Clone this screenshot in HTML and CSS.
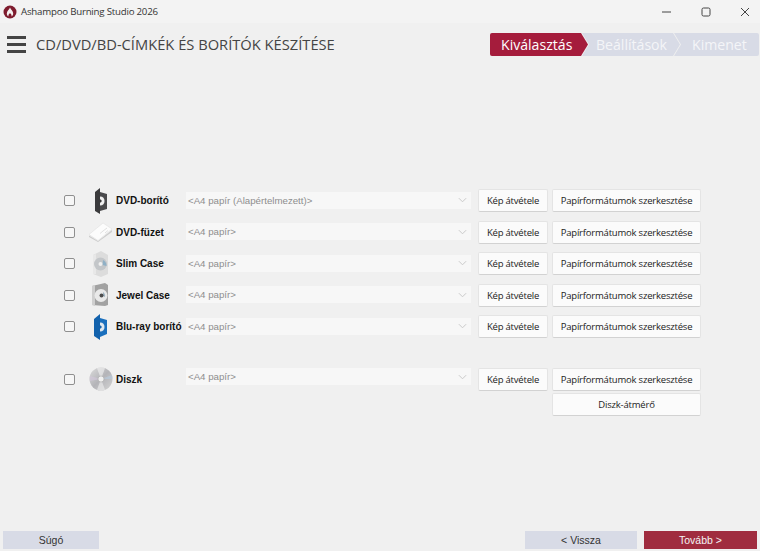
FILE: index.html
```html
<!DOCTYPE html>
<html lang="en">
<head>
  <meta charset="UTF-8">
  <meta name="viewport" content="width=device-width, initial-scale=1.0">
  <title>Ashampoo Burning Studio 2026</title>
  <link rel="stylesheet" href="styles.css">
</head>
<body>
  <svg class="defs" width="0" height="0">
    <symbol id="chev" viewBox="0 0 10 6"><path d="M1 1l4 4 4-4" fill="none" stroke="#c4c4c4" stroke-width="1"/></symbol>
  </svg>

  <div class="titlebar">
    <svg class="app-logo" viewBox="0 0 14 14" width="14" height="14">
      <circle cx="7" cy="7" r="6.500" fill="#7e1c2e"/>
      <path d="M7 2.500c.6 2 3.200 3.400 3.200 6.100 0 1.600-1 2.600-1.600 2.900.2-1.500-.5-2.500-1.600-3.200-1.100.7-1.800 1.700-1.600 3.200-.6-.3-1.600-1.300-1.600-2.900C3.800 5.900 6.400 4.500 7 2.500z" fill="#f4f0f0"/>
    </svg>
    <span class="app-name">Ashampoo Burning Studio 2026</span>
    <div class="win-controls">
      <svg viewBox="0 0 10 10" width="10" height="10"><path d="M0 5h9" stroke="#444" stroke-width="1"/></svg>
      <svg viewBox="0 0 10 10" width="10" height="10"><rect x="1" y="1" width="8" height="8" rx="1.500" fill="none" stroke="#444" stroke-width="1"/></svg>
      <svg viewBox="0 0 10 10" width="10" height="10"><path d="M1 1l8 8M9 1l-8 8" stroke="#444" stroke-width="1"/></svg>
    </div>
  </div>

  <header class="topbar">
    <div class="hamburger"><span></span><span></span><span></span></div>
    <h1>CD/DVD/BD-CÍMKÉK ÉS BORÍTÓK KÉSZÍTÉSE</h1>
    <div class="steps">
      <svg class="steps-bg" viewBox="0 0 269 23" width="269" height="23">
        <path d="M2 0H91l7 11.500-7 11.500H2a2 2 0 0 1-2-2V2a2 2 0 0 1 2-2z" fill="#a51c3c"/>
        <path d="M92 0H183l7 11.500-7 11.500H92l7-11.500z" fill="#d8dbe6"/>
        <path d="M184 0H267a2 2 0 0 1 2 2v19a2 2 0 0 1-2 2H184l7-11.500z" fill="#d8dbe6"/>
      </svg>
      <span class="step step-active">Kiválasztás</span>
      <span class="step step-mid">Beállítások</span>
      <span class="step step-last">Kimenet</span>
    </div>
  </header>

  <main class="content">
    <div class="row">
      <span class="check"></span>
      <span class="icon">
        <svg viewBox="0 0 24 28" width="24" height="28">
          <path d="M6 5l5-4v26l-5-3z" fill="#3a3a3c"/>
          <path d="M11 5l7 2v15l-7 2z" fill="#4a4a4c"/>
          <path d="M11 9.500c3.200 0 4.500 2 4.500 4.500s-1.300 4.500-4.500 4.500z" fill="#f0f0f0"/>
          <path d="M11 12.500c1 0 1.700.6 1.700 1.500s-.7 1.500-1.700 1.500z" fill="#333"/>
        </svg>
      </span>
      <span class="label">DVD-borító</span>
      <div class="select"><span>&lt;A4 papír (Alapértelmezett)&gt;</span><svg width="9" height="6"><use href="#chev"/></svg></div>
      <button class="btn btn-take">Kép átvétele</button>
      <button class="btn btn-wide">Papírformátumok szerkesztése</button>
    </div>
    <div class="row">
      <span class="check"></span>
      <span class="icon">
        <svg viewBox="0 0 24 20" width="24" height="20">
          <path d="M0 13.500l9 5.500 14-11v2L9 20 0 15z" fill="#cdcdcd"/>
          <path d="M0 12.500L14 1l9 6L9 18.500z" fill="#fcfcfc" stroke="#dcdcdc" stroke-width=".5"/>
          <path d="M14 9l4-3M11 11.500l3-2.500M16 11l3-2.500" stroke="#d4d4d4" stroke-width=".7"/>
        </svg>
      </span>
      <span class="label">DVD-füzet</span>
      <div class="select"><span>&lt;A4 papír&gt;</span><svg width="9" height="6"><use href="#chev"/></svg></div>
      <button class="btn btn-take">Kép átvétele</button>
      <button class="btn btn-wide">Papírformátumok szerkesztése</button>
    </div>
    <div class="row">
      <span class="check"></span>
      <span class="icon">
        <svg viewBox="0 0 24 28" width="24" height="28">
          <path d="M4 5l8-4 7 4v19l-7 3-8-3z" fill="#dcdcdc"/>
          <path d="M4 5l3-1v20l-3 0z" fill="#e8e8e8"/>
          <circle cx="11.500" cy="14" r="6.500" fill="#c3c6c9"/>
          <path d="M14 10a6.500 6.500 0 0 1 3.500 6l-4-1z" fill="#8fb0c6"/>
          <circle cx="11.500" cy="14" r="2" fill="#efefef"/>
        </svg>
      </span>
      <span class="label">Slim Case</span>
      <div class="select"><span>&lt;A4 papír&gt;</span><svg width="9" height="6"><use href="#chev"/></svg></div>
      <button class="btn btn-take">Kép átvétele</button>
      <button class="btn btn-wide">Papírformátumok szerkesztése</button>
    </div>
    <div class="row">
      <span class="check"></span>
      <span class="icon">
        <svg viewBox="0 0 24 28" width="24" height="28">
          <path d="M3 5l13-3 3 2v20l-3 1-13-1z" fill="#a2a2a2"/>
          <path d="M3 5l3-1v21l-3-1z" fill="#cfcfcf"/>
          <circle cx="12" cy="14.500" r="6.500" fill="#e9e9e9"/>
          <path d="M14 11a5 5 0 0 1 2 5l-2-1z" fill="#9fb4c2"/>
          <circle cx="12.500" cy="14.500" r="2" fill="#4e4e4e"/>
        </svg>
      </span>
      <span class="label">Jewel Case</span>
      <div class="select"><span>&lt;A4 papír&gt;</span><svg width="9" height="6"><use href="#chev"/></svg></div>
      <button class="btn btn-take">Kép átvétele</button>
      <button class="btn btn-wide">Papírformátumok szerkesztése</button>
    </div>
    <div class="row">
      <span class="check"></span>
      <span class="icon">
        <svg viewBox="0 0 24 28" width="24" height="28">
          <path d="M5 6l6-5v26l-6-4z" fill="#1262ad"/>
          <path d="M11 5l7 2v14l-7 3z" fill="#1a6fbd"/>
          <path d="M11 9.500c3.200 0 4.500 2 4.500 4.500s-1.300 4.500-4.500 4.500z" fill="#dfe7ee"/>
          <path d="M11 12.500c1 0 1.700.6 1.700 1.500s-.7 1.500-1.700 1.500z" fill="#1262ad"/>
        </svg>
      </span>
      <span class="label">Blu-ray borító</span>
      <div class="select"><span>&lt;A4 papír&gt;</span><svg width="9" height="6"><use href="#chev"/></svg></div>
      <button class="btn btn-take">Kép átvétele</button>
      <button class="btn btn-wide">Papírformátumok szerkesztése</button>
    </div>
    <div class="row row-disc">
      <span class="check"></span>
      <span class="icon">
        <svg viewBox="0 0 24 24" width="24" height="24">
          <defs>
            <linearGradient id="disc" x1="0" y1="0" x2="1" y2="1">
              <stop offset="0" stop-color="#dcdcdc"/>
              <stop offset=".5" stop-color="#b4b4b8"/>
              <stop offset="1" stop-color="#d4d4d4"/>
            </linearGradient>
          </defs>
          <circle cx="12" cy="12" r="11.500" fill="url(#disc)"/>
          <path d="M12 12L1 9a11.500 11.500 0 0 0 0 5z" fill="#d4c8dc" fill-opacity=".6"/>
          <path d="M12 12l11-4a11.500 11.500 0 0 1 .4 4z" fill="#b8cbe0" fill-opacity=".6"/>
          <path d="M12 12L8 1.200a11.500 11.500 0 0 1 8 0z" fill="#f4f4f4" fill-opacity=".6"/>
          <path d="M12 12l-4 10.800a11.500 11.500 0 0 0 8 0z" fill="#f0f0f0" fill-opacity=".6"/>
          <circle cx="12" cy="12" r="3" fill="#f0f0f0" stroke="#9c9c9c" stroke-width=".5"/>
        </svg>
      </span>
      <span class="label">Diszk</span>
      <div class="select select-disc"><span>&lt;A4 papír&gt;</span><svg width="9" height="6"><use href="#chev"/></svg></div>
      <button class="btn btn-take">Kép átvétele</button>
      <button class="btn btn-wide">Papírformátumok szerkesztése</button>
    </div>
    <div class="row-extra">
      <button class="btn btn-wide">Diszk-átmérő</button>
    </div>
  </main>

  <footer class="footer">
    <button class="nav nav-help">Súgó</button>
    <button class="nav nav-back">&lt; Vissza</button>
    <button class="nav nav-next">Tovább &gt;</button>
  </footer>
</body>
</html>
```

FILE: styles.css
```css
* {
  box-sizing: border-box;
}
html, body {
  margin: 0;
  padding: 0;
}
body {
  width: 760px;
  height: 551px;
  overflow: hidden;
  display: flex;
  flex-direction: column;
  background-color: #f0f0f0;
  font-family: "Liberation Sans", Arial, sans-serif;
}
.defs {
  position: absolute;
}

/* window title */
.titlebar {
  height: 23px;
  flex: none;
  display: flex;
  align-items: center;
  padding-left: 3px;
  background-color: #f3f3f3;
}
.app-logo {
  margin-right: 4px;
}
.app-name {
  font-family: "Open Sans", sans-serif;
  font-size: 9.700px;
  letter-spacing: -0.22px;
  color: #333;
}
.win-controls {
  margin-left: auto;
  display: flex;
  gap: 29px;
  padding-right: 10px;
}

/* header */
.topbar {
  height: 42px;
  flex: none;
  display: flex;
  align-items: center;
  padding-left: 7px;
  padding-right: 1px;
}
.hamburger {
  width: 19px;
  display: flex;
  flex-direction: column;
  gap: 4px;
  margin-right: 10px;
}
.hamburger span {
  height: 3px;
  background-color: #444;
}
.topbar h1 {
  margin: 0;
  font-family: "Open Sans", sans-serif;
  font-size: 14.700px;
  font-weight: 400;
  color: #444;
  white-space: nowrap;
}
.steps {
  position: relative;
  margin-left: auto;
  width: 269px;
  height: 23px;
  font-family: "Open Sans", sans-serif;
  font-size: 14.100px;
}
.steps-bg {
  position: absolute;
  left: 0;
  top: 0;
}
.step {
  position: absolute;
  top: 1px;
  line-height: 21px;
  color: #f4f5f8;
}
.step-active {
  left: 11px;
  color: #fff;
}
.step-mid {
  left: 106px;
}
.step-last {
  left: 202px;
}

/* rows */
.content {
  flex: 1;
  padding: 124px 59px 0 64px;
}
.row {
  display: flex;
  align-items: center;
  height: 23px;
  margin-bottom: 8.500px;
}
.row-disc {
  margin-top: 29.500px;
  margin-bottom: 2.500px;
}
.row-extra {
  display: flex;
  justify-content: flex-end;
}
.check {
  width: 11px;
  height: 11px;
  border: 1px solid #8f8f8f;
  border-radius: 2px;
  background-color: #f6f6f6;
  margin-right: 14px;
  flex: none;
}
.icon {
  width: 24px;
  height: 23px;
  display: flex;
  align-items: center;
  justify-content: center;
  flex: none;
  margin-right: 3px;
}
.label {
  width: 70px;
  font-size: 10px;
  font-weight: 700;
  color: #111;
  white-space: nowrap;
}
.select {
  width: 285px;
  height: 17px;
  margin-top: -1px;
  display: flex;
  align-items: center;
  justify-content: space-between;
  padding: 0 2px;
  background-color: #f7f7f7;
  font-size: 9.700px;
  color: #8e8e8e;
  margin-right: 7px;
  flex: none;
}
.select svg {
  margin-right: 2px;
}
.select-disc {
  margin-top: -5px;
}
.btn {
  height: 23px;
  padding: 0;
  border: 1px solid #e4e4e4;
  border-bottom-color: #d2d2d2;
  border-radius: 2px;
  background-color: #fbfbfb;
  font-family: "Open Sans", sans-serif;
  font-size: 9.500px;
  letter-spacing: -0.2px;
  color: #222;
  flex: none;
}
.btn-take {
  width: 70px;
  margin-right: 4px;
}
.btn-wide {
  width: 149px;
}

/* bottom nav */
.footer {
  height: 18px;
  flex: none;
  margin-bottom: 2px;
  display: flex;
  padding: 0 3px;
}
.nav {
  height: 18px;
  padding: 0;
  border: none;
  font-family: "Liberation Sans", Arial, sans-serif;
  font-size: 10.500px;
  color: #333;
  background-color: #d8dbe6;
}
.nav-help {
  width: 96px;
}
.nav-back {
  width: 112px;
  margin-left: auto;
  margin-right: 7px;
}
.nav-next {
  width: 113px;
  background-color: #a02c3f;
  color: #f4f4f4;
}
```
